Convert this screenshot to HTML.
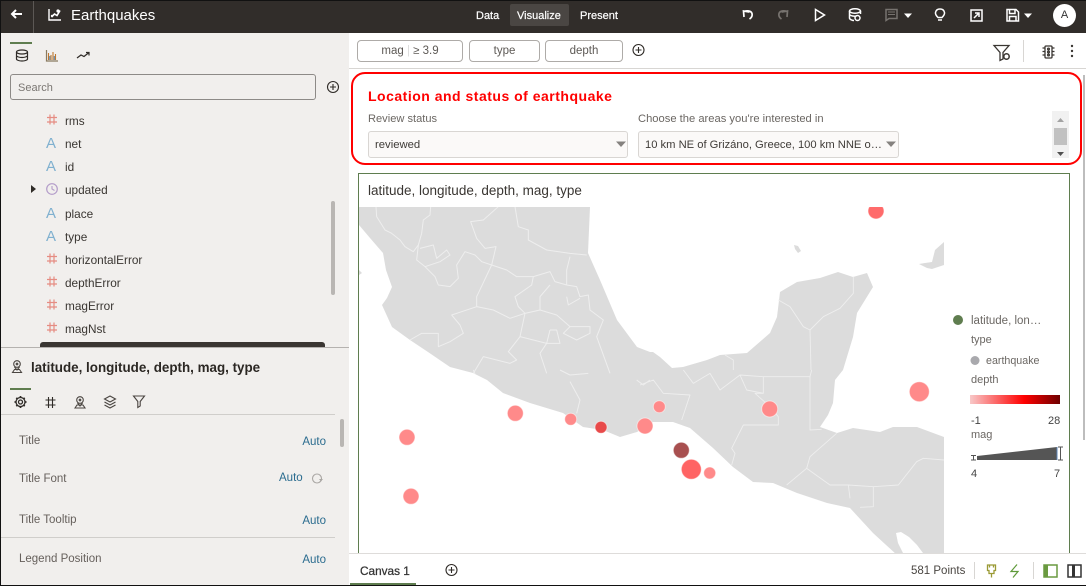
<!DOCTYPE html>
<html><head><meta charset="utf-8"><style>
html,body{margin:0;padding:0;background:#fff}
#p{position:relative;width:1086px;height:586px;overflow:hidden;background:#fff;font-family:"Liberation Sans",sans-serif;font-size:12px;color:#3a3632}
.t{position:absolute;white-space:nowrap;line-height:14px;height:14px}
.b{position:absolute;box-sizing:border-box}
svg{position:absolute;left:0;top:0;overflow:visible}
.pill{position:absolute;box-sizing:border-box;top:40px;height:22px;border:1px solid #aeaba8;border-radius:4px;background:#fff;text-align:center;line-height:20px;color:#5d5955;font-size:11.5px}
.sel{position:absolute;box-sizing:border-box;top:131px;height:27px;background:#fbf9f8;border:1px solid #d9d6d3;border-radius:3px;line-height:27px;padding-left:6px;font-size:11.5px;color:#3f3b37;white-space:nowrap;overflow:hidden}
.a{color:#2b6c8f;font-size:11.5px}
.l{color:#66605c;font-size:11.5px}
.leg{color:#6b6763;font-size:11px}
.r{left:65px;font-size:11.8px}
.A{left:46px;font-size:15px;color:#7fb0cf}
.n{color:#fff;font-size:11px;-webkit-text-stroke:.2px #fff}
</style></head><body><div id="p">

<div class="b" style="left:0;top:0;width:1086px;height:33px;background:#312d2a"></div>
<div class="b" style="left:0;top:33px;width:349px;height:553px;background:#f1efed"></div>
<div class="b" style="left:510px;top:4px;width:59px;height:22px;background:#4a4643;border-radius:2px"></div>
<div class="b" style="left:33px;top:0;width:1px;height:33px;background:#5c5855"></div>

<span class="t" style="left:71px;top:9px;font-size:15px;color:#fff">Earthquakes</span>
<span class="t n" style="left:476px;top:9px">Data</span>
<span class="t n" style="left:517px;top:9px">Visualize</span>
<span class="t n" style="left:580px;top:9px">Present</span>
<div class="b" style="left:1053px;top:4px;width:23px;height:23px;border-radius:50%;background:#fff;text-align:center;line-height:23px;font-size:11px;color:#333">A</div>

<!-- left panel text -->
<div class="b" style="left:10px;top:42px;width:22px;height:2px;background:#5f7d4f"></div>
<div class="b" style="left:10px;top:74px;width:306px;height:26px;border:1px solid #8d8a87;border-radius:3px;background:#f1efed"></div>
<span class="t" style="left:18px;top:81px;font-size:11px;color:#7b7773">Search</span>

<span class="t r" style="top:114px">rms</span>
<span class="t A" style="top:137px">A</span><span class="t r" style="top:137px">net</span>
<span class="t A" style="top:160px">A</span><span class="t r" style="top:160px">id</span>
<span class="t r" style="top:183px">updated</span>
<span class="t A" style="top:207px">A</span><span class="t r" style="top:207px">place</span>
<span class="t A" style="top:230px">A</span><span class="t r" style="top:230px">type</span>
<span class="t r" style="top:253px">horizontalError</span>
<span class="t r" style="top:276px">depthError</span>
<span class="t r" style="top:299px">magError</span>
<span class="t r" style="top:322px">magNst</span>

<div class="b" style="left:331px;top:201px;width:4px;height:94px;background:#b9b6b3;border-radius:2px"></div>
<div class="b" style="left:40px;top:342px;width:285px;height:6px;background:#3a3632;border-radius:3px 3px 0 0"></div>
<div class="b" style="left:1px;top:347px;width:348px;height:1px;background:#b5b2af"></div>
<span class="t" style="left:31px;top:361px;font-size:13.4px;font-weight:bold;color:#2b2723">latitude, longitude, depth, mag, type</span>
<div class="b" style="left:10px;top:388px;width:21px;height:2px;background:#5f7d4f"></div>
<div class="b" style="left:1px;top:414px;width:334px;height:1px;background:#d0cecb"></div>
<div class="b" style="left:1px;top:537px;width:334px;height:1px;background:#d0cecb"></div>
<div class="b" style="left:340px;top:419px;width:4px;height:28px;background:#b9b6b3;border-radius:2px"></div>
<span class="t l" style="left:19px;top:434px">Title</span><span class="t a" style="right:760px;top:435px">Auto</span>
<span class="t l" style="left:19px;top:472px">Title Font</span><span class="t a" style="left:279px;top:471px">Auto</span>
<span class="t l" style="left:19px;top:513px">Title Tooltip</span><span class="t a" style="right:760px;top:514px">Auto</span>
<span class="t l" style="left:19px;top:552px">Legend Position</span><span class="t a" style="right:760px;top:553px">Auto</span>

<!-- filter bar -->
<div class="b" style="left:349px;top:68px;width:737px;height:1px;background:#d8d6d3"></div>
<div class="pill" style="left:357px;width:106px">mag&nbsp;<span style="color:#ddd">|</span>&nbsp;≥ 3.9</div>
<div class="pill" style="left:469px;width:71px">type</div>
<div class="pill" style="left:545px;width:78px">depth</div>
<div class="b" style="left:1023px;top:40px;width:1px;height:22px;background:#d8d6d3"></div>

<!-- widget -->
<div class="b" style="left:351px;top:72px;width:731px;height:93px;border:2px solid #f00;border-radius:14px"></div>
<span class="t" style="left:368px;top:89px;font-size:14px;font-weight:bold;color:#f00;letter-spacing:.5px">Location and status of earthquake</span>
<span class="t" style="left:368px;top:112px;font-size:11.1px;color:#6b6763">Review status</span>
<span class="t" style="left:638px;top:112px;font-size:11.2px;color:#6b6763">Choose the areas you're interested in</span>
<div class="sel" style="left:368px;width:260px;font-size:11.3px">reviewed</div>
<div class="sel" style="left:638px;width:261px;font-size:11.2px">10 km NE of Grizáno, Greece, 100 km NNE o…</div>
<div class="b" style="left:1052px;top:111px;width:17px;height:47px;background:#f1f1f1"></div>
<div class="b" style="left:1054px;top:128px;width:13px;height:17px;background:#c1c1c1"></div>

<!-- chart frame -->
<div class="b" style="left:358px;top:173px;width:712px;height:381px;border:1px solid #5f7d4f;border-bottom:0;background:#fff"></div>
<span class="t" style="left:368px;top:184px;font-size:13.5px;color:#3a3632">latitude, longitude, depth, mag, type</span>

<!-- map -->
<svg width="1086" height="586" viewBox="0 0 1086 586">
<defs><clipPath id="mc"><rect x="359" y="207" width="585" height="346"/></clipPath>
<clipPath id="mc2"><rect x="359" y="207" width="700" height="346"/></clipPath></defs>
<g clip-path="url(#mc)">
<path fill="#dcdcdc" d="M359 207V225L370 238 383 253 386 270 392 287 387 298 382 305 392 327 410 340 428 352 450 367 473 373 487 380 503 393 530 403 563 413 583 427 603 430 620 437 637 432 653 422 673 422 690 428 713 448 733 467 753 482 773 483 797 493 827 503 850 508 873 533 897 555H944V437L917 427 893 427 880 432 853 428 837 433 820 427 828 415 833 403 835 380 843 370 853 337 857 313 873 287 867 273 853 277 838 272 820 278 797 282 780 292 777 317 770 333 747 353 720 355 707 360 683 367 672 368 660 357 653 352 650 352 637 347 617 320 600 280 588 253 590 207Z"/>
<path fill="#dcdcdc" d="M359 270l3 3-3 2zM794 245l4 1 3 5-3 2-3-4zM944 242L935 250 932 262 925 263 919 264 927 268 932 269 944 265z"/>
<path fill="#fff" d="M896 533l5-1 8 5 8 8 6 8h-20l-5-10zM847 385l3-2 1 8-3 1zM880 423l8-2 1 2-8 2zM877 416l10-4 2-1-2 4-10 4zM897 412l2-1 0 3-2 0z"/>
<g fill="none" stroke="#eeeeee" stroke-linejoin="round">
<g transform="translate(350 170) scale(.33333)" stroke-width="3">
<path d="M78 110L80 140 105 180 125 190 150 210 165 230 190 245 205 225 215 190 220 150 240 135 242 110"/>
<path d="M205 225L200 270 225 290 255 320 265 345 300 350 325 325 320 285 345 245 375 255 395 275 425 285 438 230 405 235 380 205 362 155 400 150 445 110"/>
<path d="M210 235L250 225 260 265 290 240 300 255 270 275 225 290"/>
<path d="M425 285L380 380 380 410 305 435 330 465 340 490 300 515 265 530 265 490 215 490 180 510"/>
<path d="M425 285L470 300 500 320 550 320 600 305 615 335 650 345 680 350 690 380 715 375 720 420 760 450 740 500 780 610"/>
<path d="M550 320L545 345 495 380 505 410 525 430 480 445 430 420 380 410"/>
<path d="M495 110L505 170 535 180 535 210 590 240 660 250 710 255M660 260L650 300 650 345"/>
<path d="M600 345L570 380 570 420 525 430 510 500 475 545 500 570 480 580 400 560 370 610"/>
<path d="M570 420L620 435 660 470 720 470 720 490 680 510 640 490 660 470M600 480L620 480 630 520 590 520 600 480M510 500L590 520 570 550 590 610M650 380L655 405 690 385"/>
</g>
<g transform="translate(640 370) scale(.33333)" stroke-width="2.7">
<path d="M130 0L160 40 210 10 240 60 300 15 320 60 370 70 370 20 510 20 515 0M300 15L370 20"/>
<path d="M0 45L40 30 70 70 150 75 125 150M370 70L345 70 390 110 415 140 415 165 310 165 275 235 285 250 275 285"/>
<path d="M510 20L510 180 545 178M590 190L510 260 500 295 440 345M500 295L570 345 625 345 630 385M625 345L700 350 700 410 660 412M700 350L775 345 830 275 850 265 912 270"/>
</g>
<g transform="translate(640 170) scale(.33333)" stroke-width="2.700">
<path d="M640 320L640 370 600 415 550 440 510 480M415 390L450 410 490 470 510 480 513 600M255 555L280 570 280 600"/>
</g>
<g transform="translate(350 370) scale(.33333)" stroke-width="3">
<path d="M370 0L375 12M630 0L660 15 715 10M660 35L690 90 680 130M860 30L880 45 900 30"/>
</g>
</g>
</g>
<g clip-path="url(#mc2)" stroke="#fff" stroke-opacity=".5" stroke-width="1">
<circle cx="876" cy="211" r="8" fill="#ff6b6b"/>
<circle cx="919.3" cy="391.7" r="10" fill="#ff8a8a"/>
<circle cx="769.7" cy="409" r="8" fill="#ff8a8a"/>
<circle cx="659.3" cy="406.7" r="6" fill="#ff8a8a"/>
<circle cx="645" cy="426" r="8" fill="#ff8a8a"/>
<circle cx="681.3" cy="450.3" r="8" fill="#a85050"/>
<circle cx="691.3" cy="469.3" r="10" fill="#ff6464"/>
<circle cx="709.7" cy="473" r="6" fill="#ff8a8a"/>
<circle cx="515.3" cy="413.3" r="8" fill="#ff8a8a"/>
<circle cx="570.7" cy="419.3" r="6" fill="#ff8a8a"/>
<circle cx="601" cy="427.3" r="6" fill="#e84a4a"/>
<circle cx="407" cy="437.3" r="8" fill="#ff8a8a"/>
<circle cx="411" cy="496.3" r="8" fill="#ff8a8a"/>
</g>

<!-- legend graphics -->
<defs><linearGradient id="lg"><stop offset="0" stop-color="#f8c8c8"/><stop offset=".6" stop-color="#f00"/><stop offset="1" stop-color="#6e0000"/></linearGradient></defs>
<circle cx="958" cy="320" r="5" fill="#5f7d4f"/>
<circle cx="975" cy="360.5" r="4.5" fill="#a9a9ad"/>
<rect x="970" y="395" width="90" height="9" fill="url(#lg)"/>
<path d="M977 460V456L1057 447V460Z" fill="#555"/>
<path d="M971 455.5h5M973.5 455.5v4.5M971 460h5" stroke="#555" stroke-width="1" fill="none"/>
<path d="M1057 447v13" stroke="#5b83b5" stroke-width="1"/>
<path d="M1058 447h5M1060.500 447v13M1058 460h5" stroke="#555" stroke-width="1" fill="none"/>

<!-- header icons -->
<g fill="none" stroke="#fff" stroke-width="1.5">
<path d="M12 14h10M16 10l-4 4 4 4" stroke-width="2"/>
<path d="M49 9v11h12" stroke-width="1.4"/>
<path d="M51.500 17l3-3 2.500 1.500 3-5" stroke-width="1.6"/>
<circle cx="52" cy="16" r="1.2" fill="#fff" stroke="none"/><circle cx="58" cy="11" r="1.600" fill="#fff" stroke="none"/>
<path d="M744 17l-.5-6 6 1M744 11.500c3-1 7-1 8 2 .8 3-1 4.500-2.500 5.500" stroke-width="1.700"/>
<path d="M787 17l.5-6-6 1M787 11.500c-3-1-7-1-8 2-.8 3 1 4.500 2.500 5.500" stroke="#77736f" stroke-width="1.700"/>
<path d="M815.500 9.500v11l9-5.500z"/>
<ellipse cx="855" cy="11" rx="5.500" ry="2.200"/><path d="M849.500 11v7c0 1.500 3 2.500 4.500 2.500M860.500 11v3M849.500 14.500c1 1.500 5 2 7 1.500"/><circle cx="857.500" cy="18" r="2.500"/>
<path d="M886 9.500h11v9h-8l-3 2z" stroke="#77736f" stroke-width="1.500"/>
<path d="M888 12h7M888 14.500h7" stroke="#77736f" stroke-width="1"/>
<path d="M938 17.500c-2-2-2.800-3.500-2.500-5 .5-2.500 2.500-3.500 4.500-3.500s4 1 4.500 3.500c.3 1.500-.5 3-2.500 5zM938 20h4"/>
<path d="M971 10h11v11h-11zM974 18l5-5M975 13h4v4"/>
<path d="M1007 9.500h9l2.500 2.500v9h-11.500zM1009.500 9.500v4h5.500v-4M1009.500 21v-4.500h6.500v4.500"/>
</g>
<path d="M904 13.500h8l-4 4.500zM1024 13.500h8l-4 4.500z" fill="#fff"/>

<!-- left panel icons -->
<g fill="none" stroke="#2f2b27" stroke-width="1.200">
<ellipse cx="22" cy="52" rx="5.500" ry="2"/><path d="M16.500 52v7c0 1 2.500 2 5.500 2s5.500-1 5.500-2v-7M16.500 55.500c0 1 2.500 2 5.500 2s5.500-1 5.500-2" />
<path d="M77 58l4-3 3 1.500 5-4M86 52.500h3v3"/>
<path d="M46.500 50v11h11.500" stroke="#8a7a60"/>
</g>
<path d="M48.500 60v-7M51 60v-5M53 60v-8M55.500 60v-6" stroke="#c07830" stroke-width="1.100"/>
<path d="M49.800 60v-4M54.300 60v-4" stroke="#4d7ea8" stroke-width="1"/>
<circle cx="333" cy="87" r="5.500" fill="none" stroke="#2f2b27" stroke-width="1.100"/><path d="M330 87h6M333 84v6" stroke="#2f2b27" stroke-width="1.100"/>
<path d="M31 185l5 4-5 4z" fill="#2f2b27"/>
<circle cx="52" cy="189" r="5.300" fill="none" stroke="#b39cc9" stroke-width="1.200"/><path d="M52 186v3l2.500 1.500" fill="none" stroke="#b39cc9" stroke-width="1.100"/>

<!-- hash field icons -->
<g fill="none" stroke="#e58c82" stroke-width="1.200">
<path d="M47 117.500h10M47 122h10M50 114.500v10M54 114.500v10"/>
<path d="M47 256.500h10M47 261h10M50 253.500v10M54 253.500v10"/>
<path d="M47 279.500h10M47 284h10M50 276.500v10M54 276.500v10"/>
<path d="M47 302.500h10M47 307h10M50 299.500v10M54 299.500v10"/>
<path d="M47 325.500h10M47 330h10M50 322.500v10M54 322.500v10"/>
</g>

<g fill="none" stroke="#4a4541" stroke-width="1.100">
<circle cx="17" cy="364" r="3.300"/><circle cx="17" cy="364" r=".8"/><path d="M14.500 367l2.500 3 2.500-3M12.500 372.500l2-3h5l2 3z"/>
<circle cx="80" cy="400" r="3.300"/><circle cx="80" cy="400" r=".8"/><path d="M77.500 403l2.500 3 2.500-3M75 408l2-3h6l2 3z"/>
<path d="M110 396l5.500 3-5.500 3-5.500-3zM104.500 402l5.500 3 5.500-3M104.500 405l5.500 3 5.500-3"/>
<path d="M133.500 396h11l-4.300 5.500v4.500l-2.400 1.500v-6z"/>
</g>
<g fill="none" stroke="#2f2b27" stroke-width="1.300">
<circle cx="20.500" cy="402" r="2"/><circle cx="20.500" cy="402" r="4.500"/>
<path d="M20.500 396v2M20.500 406v2M14.500 402h2M24.500 402h2M16.300 397.800l1.300 1.300M23.400 404.900l1.300 1.300M24.700 397.800l-1.300 1.300M17.600 404.900l-1.300 1.300" stroke-width="1.700"/>
<path d="M48.500 397v11M52.500 397v11M45.500 400h10M45.500 405h10" stroke-width="1.100"/>
</g>
<circle cx="317" cy="478.500" r="4.500" fill="none" stroke="#aaa7a4" stroke-width="1.100"/><path d="M319 479h4l-2 2.500z" fill="#aaa7a4"/>

<!-- select arrows -->
<path d="M616 141.500h10l-5 5.500zM886 141.500h10l-5 5.500z" fill="#85827f"/>
<path d="M1057 122l3.500-4 3.500 4z" fill="#a3a3a3"/><path d="M1057 152l3.500 4 3.500-4z" fill="#505050"/>

<!-- filter bar icons -->
<circle cx="638.500" cy="50" r="5.500" fill="none" stroke="#2f2b27" stroke-width="1.100"/><path d="M635.500 50h6M638.500 47v6" stroke="#2f2b27" stroke-width="1.100"/>
<g fill="none" stroke="#3a3632" stroke-width="1.300">
<path d="M994 45.500h15l-6 7v6.500l-3 1.500v-8z"/><circle cx="1006.500" cy="56.500" r="2.700" stroke-width="1.500"/>
<rect x="1045" y="46" width="7" height="12" rx="1"/><path d="M1042.500 48h2.500M1042.500 51.500h2.500M1042.500 55h2.500M1052 48h2.500M1052 51.500h2.500M1052 55h2.500"/>
<circle cx="1048.500" cy="49" r=".9"/><circle cx="1048.500" cy="52" r=".9"/><circle cx="1048.500" cy="55" r=".9"/>
</g>
<circle cx="1072" cy="46" r="1.200" fill="#3a3632"/><circle cx="1072" cy="51" r="1.200" fill="#3a3632"/><circle cx="1072" cy="56" r="1.200" fill="#3a3632"/>

<!-- bottom bar graphics -->
<circle cx="451.500" cy="570" r="5.500" fill="none" stroke="#2f2b27" stroke-width="1.100"/><path d="M448.500 570h6M451.500 567v6" stroke="#2f2b27" stroke-width="1.100"/>
<path d="M987.500 565h8v5.500h-1.500v3h-5v-3h-1.500zM991.500 573.500v4M989.500 565v2.500M993.500 565v2.500" fill="none" stroke="#9a9a35" stroke-width="1.300"/>
<path d="M1017 564.500l-6 7h7l-5 6" fill="none" stroke="#5f9a3a" stroke-width="1.200"/>
<rect x="1044" y="565" width="13" height="12" fill="#fff" stroke="#6a9a40" stroke-width="1.500"/><rect x="1044" y="565" width="4" height="12" fill="#6a9a40"/>
<rect x="1068" y="565" width="13" height="12" fill="#fff" stroke="#333" stroke-width="1.500"/><rect x="1072" y="565" width="3" height="12" fill="#333"/>
</svg>

<!-- legend text -->
<span class="t leg" style="left:971px;top:314px;font-size:11.5px">latitude, lon…</span>
<span class="t leg" style="left:971px;top:333px">type</span>
<span class="t leg" style="left:986px;top:354px;font-size:10.7px">earthquake</span>
<span class="t leg" style="left:971px;top:373px">depth</span>
<span class="t leg" style="left:971px;top:414px;color:#444">-1</span>
<span class="t leg" style="left:1048px;top:414px;color:#444">28</span>
<span class="t leg" style="left:971px;top:428px">mag</span>
<span class="t leg" style="left:971px;top:467px;color:#444">4</span>
<span class="t leg" style="left:1054px;top:467px;color:#444">7</span>

<!-- bottom -->
<div class="b" style="left:349px;top:553px;width:737px;height:1px;background:#dedcda"></div>
<div class="b" style="left:350px;top:583px;width:66px;height:2px;background:#5f7d4f"></div>
<span class="t" style="left:360px;top:564px;font-size:11.8px;color:#333;-webkit-text-stroke:.25px #333">Canvas 1</span>
<span class="t" style="left:911px;top:564px;font-size:11.5px;color:#4a4642">581 Points</span>
<div class="b" style="left:974px;top:562px;width:1px;height:17px;background:#d8d6d3"></div>
<div class="b" style="left:1033px;top:562px;width:1px;height:17px;background:#d8d6d3"></div>
<div class="b" style="left:1083px;top:75px;width:2px;height:365px;background:#bdbdbd"></div>

<!-- outer edge -->
<div class="b" style="left:0;top:0;width:1086px;height:586px;border:1px solid #111;border-right:0;pointer-events:none"></div>
</div></body></html>
